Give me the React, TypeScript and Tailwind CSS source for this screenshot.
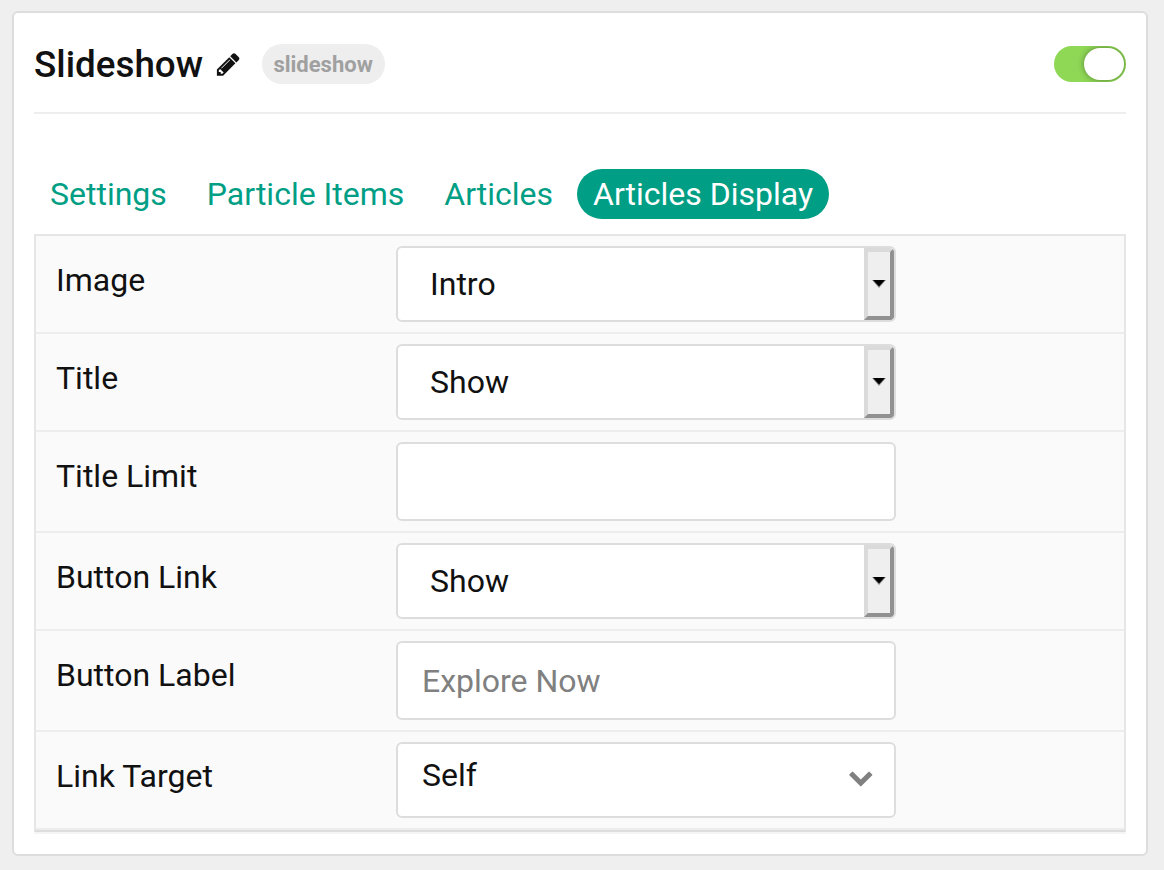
import { ReactNode } from "react";

const tabs = ["Settings", "Particle Items", "Articles", "Articles Display"];

function PencilIcon() {
  return (
    <svg viewBox="0 0 1792 1792" className="ml-[12px] h-[26.6px] w-[26.6px] fill-[#111]">
      <path d="M491 1536l91-91-235-235-91 91v107h128v128h107zM1014 608q0-22-22-22-10 0-17 7l-542 542q-7 7-7 17 0 22 22 22 10 0 17-7l542-542q7-7 7-17zM960 416l416 416-832 832h-416v-416zM1643 512q0 53-37 90l-166 166-416-416 166-165q36-38 90-38 53 0 91 38l235 234q37 39 37 91z" />
    </svg>
  );
}

function ChevronIcon() {
  return (
    <svg viewBox="0 0 1792 1792" className="mt-[20px] mr-[20px] h-[25.6px] w-[25.6px] fill-[#808080]">
      <path d="M1683 808l-742 741q-19 19-45 19t-45-19l-742-741q-19-19-19-45.5t19-45.5l166-165q19-19 45-19t45 19l531 531 531-531q19-19 45-19t45 19l166 165q19 19 19 45.5t-19 45.5z" />
    </svg>
  );
}

function NativeSelect({ value }: { value: string }) {
  return (
    <div className="flex h-[76px] w-[500px] overflow-hidden rounded-[6px] border-2 border-[#ddd] bg-white">
      <span className="flex-1 pl-8 leading-[72px]">{value}</span>
      <span className="flex w-[30px] items-center justify-center rounded-r-[4px] border-4 border-t-[#dadada] border-r-[#919191] border-b-[#919191] border-l-[#dadada] bg-[#efefef]">
        <svg viewBox="0 0 14 8" className="h-[8px] w-[14px]">
          <path d="M0 0h14L7 8z" fill="#000" fillOpacity="0.4" />
          <path d="M1 0h12L7 6.6z" fill="#000" />
        </svg>
      </span>
    </div>
  );
}

function TextInput({ placeholder = "" }: { placeholder?: string }) {
  return (
    <input
      placeholder={placeholder}
      className="block h-[79px] w-[500px] rounded-[6px] border-2 border-[#ddd] bg-white px-6 placeholder:text-[#808080]"
    />
  );
}

function CustomSelect({ value }: { value: string }) {
  return (
    <div className="flex h-[76px] w-[500px] justify-between rounded-[6px] border-2 border-[#ddd] bg-white">
      <span className="pl-6 leading-[62px]">{value}</span>
      <ChevronIcon />
    </div>
  );
}

function Row({ label, children }: { label: string; children: ReactNode }) {
  return (
    <div className="flex border-b-2 border-[#ededed] py-[10px] pl-5">
      <div className="w-[340px] leading-[68px]">{label}</div>
      {children}
    </div>
  );
}

export default function App() {
  return (
    <div className="h-[870px] overflow-hidden bg-[#efefef] px-3 pt-[11px] font-['Roboto',sans-serif] text-[#111]">
      <section className="h-[845px] w-[1136px] rounded-[6px] border-2 border-[#ddd] bg-white px-5">
        <header className="flex h-[101px] items-center border-b-2 border-[#eee] pt-[3px]">
          <h1 className="w-[169px] pt-[2px] text-[36.8px] leading-[56px] font-medium">Slideshow</h1>
          <PencilIcon />
          <span className="ml-5 flex h-10 w-[123px] items-center justify-center rounded-full bg-[#eee] pt-px text-[22px] font-bold text-[#a0a0a0]">
            slideshow
          </span>
          <div className="ml-auto flex h-9 w-[72px] justify-end overflow-hidden rounded-full bg-[#8fd856] p-[2px]">
            <div className="h-8 w-10 rounded-full bg-white shadow-[0_0_6px_rgba(0,0,0,0.4)]" />
          </div>
        </header>

        <nav className="mt-[55px] flex h-[50px] gap-2 text-[32px] leading-[50px]">
          {tabs.map((tab) => (
            <a
              key={tab}
              className={
                tab === "Articles Display"
                  ? "rounded-full bg-[#009e84] px-4 text-white"
                  : "px-4 text-[#009e84]"
              }
            >
              {tab}
            </a>
          ))}
        </nav>

        <div className="mt-[15px] border-2 border-[#e6e6e6] border-b-[#ddd] bg-[#fafafa] text-[32px] shadow-[0_2px_0_#f5f5f5]">
          <Row label="Image"><NativeSelect value="Intro" /></Row>
          <Row label="Title"><NativeSelect value="Show" /></Row>
          <Row label="Title Limit"><TextInput /></Row>
          <Row label="Button Link"><NativeSelect value="Show" /></Row>
          <Row label="Button Label"><TextInput placeholder="Explore Now" /></Row>
          <Row label="Link Target"><CustomSelect value="Self" /></Row>
        </div>
      </section>
    </div>
  );
}
